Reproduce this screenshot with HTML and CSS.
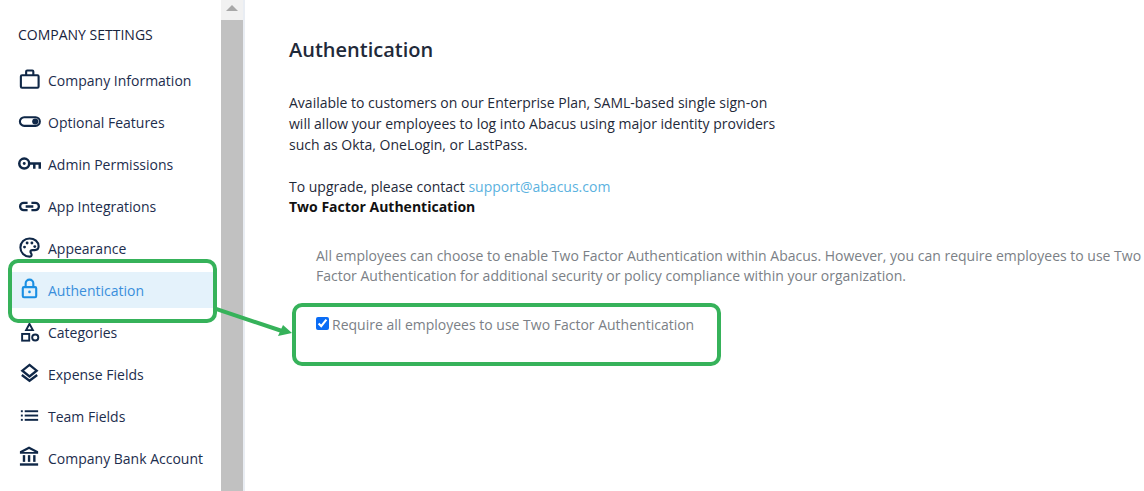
FILE: index.html
```html
<!DOCTYPE html>
<html lang="en">

<head>
    <meta charset="UTF-8">
    <meta name="viewport" content="width=device-width, initial-scale=1.0">
    <title>Authentication</title>
    <link rel="stylesheet" href="styles.css">
</head>

<body>
    <div class="page">
        <aside class="sidebar">
            <div class="sidebar-title">COMPANY SETTINGS</div>
            <nav class="menu">
                <a class="menu-item">
                    <svg class="menu-icon" viewBox="0 0 24 24" fill="none" stroke="currentColor" stroke-width="2.200"><rect x="3" y="6.500" width="18.500" height="13" rx="1.200"/><path d="M8.500 6.500V2.500a1 1 0 0 1 1-1h5.500a1 1 0 0 1 1 1v4"/></svg>
                    Company Information
                </a>
                <a class="menu-item">
                    <svg class="menu-icon" viewBox="0 0 24 24" fill="none" stroke="currentColor" stroke-width="2.200"><rect x="2" y="6.500" width="20.800" height="9" rx="4.500"/><circle cx="18" cy="11" r="3.200" fill="currentColor" stroke="none"/></svg>
                    Optional Features
                </a>
                <a class="menu-item">
                    <svg class="menu-icon" viewBox="0 0 24 24" fill="none" stroke="currentColor" stroke-width="2.600"><circle cx="6.500" cy="11" r="5.200"/><circle cx="6.500" cy="11" r="1.500" fill="currentColor" stroke="none"/><path d="M11.500 11H24M17 11v5.500M22.700 11v5.500"/></svg>
                    Admin Permissions
                </a>
                <a class="menu-item">
                    <svg class="menu-icon" viewBox="0 0 24 24" fill="none" stroke="currentColor" stroke-width="2.400"><path d="M10 8.200H6a3.800 3.800 0 0 0 0 7.600h4M14 8.200h4a3.800 3.800 0 0 1 0 7.600h-4M8 12h8"/></svg>
                    App Integrations
                </a>
                <a class="menu-item">
                    <svg class="menu-icon" viewBox="0 0 24 24" fill="none" stroke="currentColor" stroke-width="2.200"><path d="M12 1.500a9.500 9.500 0 0 0 0 19c1.500 0 2.200-1 2.200-2 0-1.500-1.200-1.800-1.200-3 0-1.100.9-1.800 2-1.800h2.500c2.500 0 4-1.800 4-4 0-4.800-4.300-8.200-9.500-8.200z"/><circle cx="6.800" cy="10.500" r="1.500" fill="currentColor" stroke="none"/><circle cx="9.500" cy="6.300" r="1.500" fill="currentColor" stroke="none"/><circle cx="14.500" cy="6.300" r="1.500" fill="currentColor" stroke="none"/><circle cx="17.500" cy="10" r="1.500" fill="currentColor" stroke="none"/></svg>
                    Appearance
                </a>
                <a class="menu-item active">
                    <svg class="menu-icon" viewBox="0 0 24 24" fill="none" stroke="currentColor" stroke-width="2.200"><rect x="5" y="8.500" width="14" height="10.500" rx="1.200"/><path d="M8 8.500V4.600a4 4 0 0 1 8 0V8.500"/><circle cx="12" cy="13.500" r="1.400" fill="currentColor" stroke="none"/></svg>
                    Authentication
                </a>
                <a class="menu-item">
                    <svg class="menu-icon" viewBox="0 0 24 24" fill="none" stroke="currentColor" stroke-width="2"><path d="M12 3l3.500 6.500h-7z"/><rect x="4.300" y="13.500" width="7.400" height="7"/><circle cx="18" cy="17.200" r="3.200"/></svg>
                    Categories
                </a>
                <a class="menu-item">
                    <svg class="menu-icon" viewBox="0 0 24 24" fill="none" stroke="currentColor" stroke-width="2.400"><path d="M12 2l7.500 6-7.500 6-7.500-6z"/><path d="M4 12.500l8 6 8-6"/></svg>
                    Expense Fields
                </a>
                <a class="menu-item">
                    <svg class="menu-icon" viewBox="0 0 24 24" fill="currentColor"><rect x="3" y="5.500" width="2" height="2"/><rect x="7" y="5.500" width="14" height="2"/><rect x="3" y="10" width="2" height="2"/><rect x="7" y="10" width="14" height="2"/><rect x="3" y="14.500" width="2" height="2"/><rect x="7" y="14.500" width="14" height="2"/></svg>
                    Team Fields
                </a>
                <a class="menu-item">
                    <svg class="menu-icon" viewBox="0 0 24 24" fill="currentColor"><path d="M11.500 -0.500L21 4.500V7H2V4.500zM11.500 2L5.500 5.200h12z"/><rect x="5" y="8.500" width="2.500" height="7"/><rect x="10.300" y="8.500" width="2.500" height="7"/><rect x="15.800" y="8.500" width="2.500" height="7"/><rect x="2" y="17" width="19" height="2.500"/></svg>
                    Company Bank Account
                </a>
            </nav>
        </aside>

        <div class="scrollbar">
            <div class="scroll-arrow"></div>
            <div class="scroll-thumb"></div>
        </div>

        <main class="content">
            <h1>Authentication</h1>
            <p class="intro">Available to customers on our Enterprise Plan, SAML-based single sign-on<br>will allow your employees to log into Abacus using major identity providers<br>such as Okta, OneLogin, or LastPass.</p>
            <p class="upgrade">To upgrade, please contact <a class="mail">support@abacus.com</a></p>
            <h2>Two Factor Authentication</h2>
            <div class="two-factor">
                <p>All employees can choose to enable Two Factor Authentication within Abacus. However, you can require employees to use Two<br>Factor Authentication for additional security or policy compliance within your organization.</p>
                <label class="require">
                    <input type="checkbox" checked>
                    Require all employees to use Two Factor Authentication
                </label>
            </div>
        </main>
    </div>

    <!-- Green callouts drawn on top of the screenshot -->
    <div class="callout callout-menu"></div>
    <div class="callout callout-check"></div>
    <svg class="callout-arrow" width="90" height="50" viewBox="0 0 90 50">
        <path d="M0 3L66 25" stroke="#36b25a" stroke-width="4" fill="none"/>
        <path d="M76 27L62 30L67 19z" fill="#36b25a"/>
    </svg>
</body>

</html>
```

FILE: styles.css
```css
html,
body {
    height: 100%;
}

body {
    font-family: "Open Sans", sans-serif;
    font-size: 14px;
    margin: 0;
    padding: 0;
    background-color: #fff;
    color: #17233c;
    overflow: hidden;
    position: relative;
}

.page {
    display: flex;
    height: 491px;
}

.sidebar {
    width: 220px;
    flex: none;
}

.sidebar-title {
    padding: 25px 0 0 18px;
    line-height: 20px;
    font-size: 14px;
    color: #17233c;
}

.menu {
    display: flex;
    flex-direction: column;
    gap: 6px;
    margin-top: 17px;
}

.menu-item {
    display: flex;
    align-items: center;
    gap: 7px;
    height: 36px;
    padding-left: 18px;
    color: #1c2d4d;
}

.menu-icon {
    width: 23px;
    height: 23px;
    flex: none;
    color: #0f2747;
    overflow: visible;
}

.menu-item.active {
    background-color: #e4f2fb;
    color: #3a8fdc;
    margin-left: 12px;
    margin-right: 6px;
    padding-left: 6px;
}

.menu-item.active .menu-icon {
    color: #1a8fe3;
}

.scrollbar {
    width: 22px;
    flex: none;
    margin-left: 1px;
    background-color: #f1f1f1;
    display: flex;
    flex-direction: column;
}

.scroll-arrow {
    height: 20px;
    flex: none;
    position: relative;
}

.scroll-arrow::before {
    content: "";
    position: absolute;
    left: 5px;
    top: 5px;
    border-left: 6px solid transparent;
    border-right: 6px solid transparent;
    border-bottom: 6px solid #a8a8a8;
}

.scroll-thumb {
    flex: 1;
    background-color: #c1c1c1;
}

.content {
    flex: 1;
    min-width: 0;
    border-left: 2px solid #e9edf3;
    padding-left: 44px;
    color: #1f2a3a;
    white-space: nowrap;
}

.content h1 {
    font-size: 20px;
    font-weight: 600;
    line-height: 28px;
    margin: 36px 0 0;
    color: #1f2a3a;
}

.intro {
    line-height: 21px;
    margin: 28px 0 0;
}

.upgrade {
    line-height: 21px;
    margin: 21px 0 0;
}

.mail {
    color: #5bb2e0;
}

.content h2 {
    font-size: 14px;
    font-weight: 700;
    line-height: 20px;
    margin: 0;
    color: #111;
}

.two-factor {
    padding-left: 27px;
    color: #7b7f86;
}

.two-factor p {
    line-height: 20px;
    margin: 29px 0 0;
}

.require {
    display: flex;
    align-items: center;
    line-height: 20px;
    margin-top: 29px;
    gap: 3px;
}

.require input {
    width: 13px;
    height: 13px;
    margin: 0 0 3px;
    accent-color: #0a6cf5;
}

.callout {
    position: absolute;
    box-sizing: border-box;
    border: 4px solid #36b25a;
    border-radius: 10px;
}

.callout-menu {
    left: 8px;
    top: 259px;
    width: 209px;
    height: 64px;
}

.callout-check {
    left: 292px;
    top: 303px;
    width: 429px;
    height: 63px;
}

.callout-arrow {
    position: absolute;
    left: 216px;
    top: 306px;
}
```
